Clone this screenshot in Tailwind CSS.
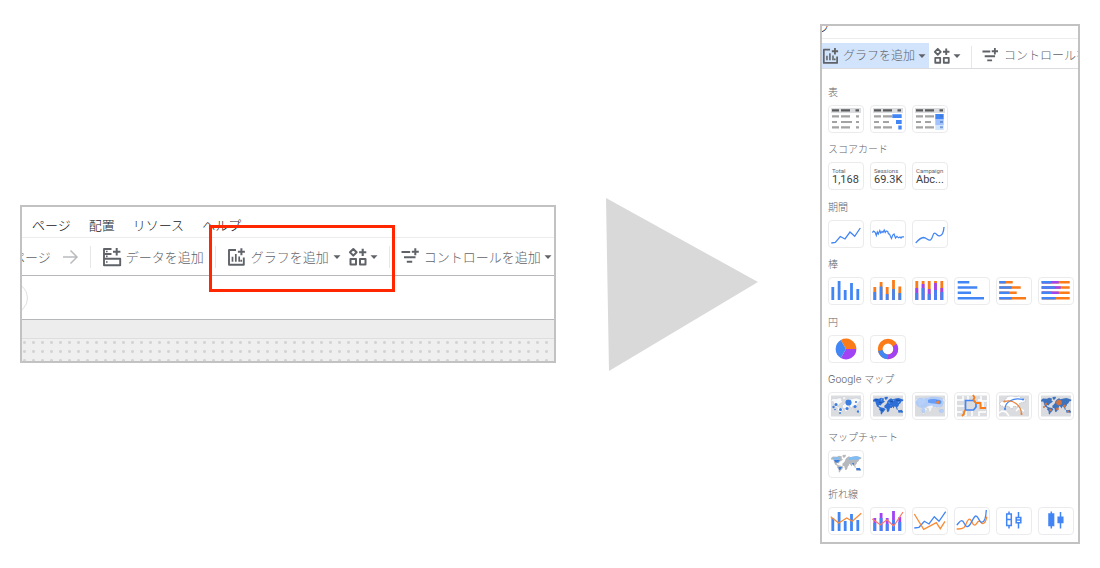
<!DOCTYPE html>
<html lang="ja">
<head>
    <meta charset="UTF-8">
    <meta name="viewport" content="width=device-width, initial-scale=1.0">
    <title>グラフを追加</title>
    <script src="https://cdn.jsdelivr.net/npm/@tailwindcss/browser@4"></script>
</head>
<body class="bg-white font-[Inter,'Noto_Sans_CJK_JP',sans-serif] font-light text-[#5f6368]">

<!-- Shared icons -->
<svg class="hidden" aria-hidden="true">
    <symbol id="icon-data" viewBox="0 0 20 20">
        <path d="M9.500 2H2v16.200h16.200v-6.400H2M2 7h7.500" fill="none" stroke="currentColor" stroke-width="1.900" stroke-linejoin="round"/>
        <path d="M14.700 1v7.400M11 4.700h7.400" stroke="currentColor" stroke-width="2"/>
        <path d="M4 3.700h1.600v1.600H4zM4 8.600h1.600v1.600H4zM4 14.200h1.600v1.600H4z" fill="currentColor"/>
    </symbol>
    <symbol id="icon-chart" viewBox="0 0 20 20">
        <path d="M9 3H2v14.700h14.800V10.500" fill="none" stroke="currentColor" stroke-width="1.900" stroke-linejoin="round"/>
        <path d="M14.400 1.200v7M10.900 4.700h7" stroke="currentColor" stroke-width="2"/>
        <path d="M5.500 9.800v5M8.800 7v7.800M12.200 9.500v5.300M14.200 12.800v2" stroke="currentColor" stroke-width="1.700"/>
    </symbol>
    <symbol id="icon-widgets" viewBox="0 0 20 20">
        <path d="M5.300 2l3.300 3.300-3.300 3.300L2 5.300zM2.500 12H8v5.500H2.500zM12 12h5.500v5.500H12z" fill="none" stroke="currentColor" stroke-width="2" stroke-linejoin="round"/>
        <path d="M14.700 1.700v7.200M11.100 5.300h7.200" stroke="currentColor" stroke-width="2.100"/>
    </symbol>
    <symbol id="icon-filter" viewBox="0 0 20 20">
        <path d="M.5 5h8.700M3 10.300h11.500M5.800 14.800h5.400M14.300 1.200v7M10.800 4.700h7" stroke="currentColor" stroke-width="2"/>
    </symbol>
    <symbol id="icon-caret" viewBox="0 0 8 8">
        <path d="M.5 2.200h7L4 6z" fill="currentColor"/>
    </symbol>
    <symbol id="world" viewBox="0 0 36 28">
        <path d="M3 8l2-1.500 4 .2 2-1 3 .8-.5 2 1.500 1-2 1.500-1.500 1-.5 1.500-1.500-.5-1 .7 1.500 1.300 1.500.5 2.500.5 1.500 1.300-1.500 2-1.500 1.500-.7 1.700-1-.5-.3-3-1.500-1.500.5-1.500-2.500-1.500L6 12l-.7-2.500-2 .2z"/>
        <path d="M14.500 5l3-.2.500 1.200-2 2-1.200-1z"/>
        <path d="M17 11l.5-2L19 7.500l2-1.200 1.500 1 3-.8 3-.5 3 1 2 .8-.5 1.200-1.800.5-.7 1.700-1.500 1-.3 1.500-1.500 1.500.5 1.800-1.300-1-1.400-1.800-.8.5-.6 1.800-1.400-2-1.500-1 .5 1.500-1.500 1.800-.4 2-1.300 1.500-1-.8-.5-3-2-.8-.2-2 1.500-1.300z"/>
        <path d="M28 18l2 .3 1.500-.5 1.500 1.700-.5 1.500-1.700-.5-2.300.2-.3-1.500zM26 16.200l2 .8-.3.700-1.700-.7z"/>
    </symbol>
</svg>

<main class="flex min-h-screen items-center px-5">

    <!-- Toolbar -->
    <section class="relative min-w-0 flex-1 overflow-hidden border-2 border-[#c2c2c2] text-[13px] leading-5">
        <nav class="flex h-[31px] items-center gap-[18px] border-b border-[#ececec] pt-1.5 pl-2.5 whitespace-nowrap text-[#202124]">
            <a href="#">ページ</a>
            <a href="#">配置</a>
            <a href="#">リソース</a>
            <a href="#">ヘルプ</a>
        </nav>
        <div class="flex h-[38px] items-center gap-[11px] border-b border-[#b6b7ba] whitespace-nowrap">
            <button type="button" class="-ml-2.5 flex shrink-0 items-center gap-3">
                ページ
                <svg class="h-4 w-4 text-[#b9bbbe]" viewBox="0 0 16 16" fill="none" stroke="currentColor" stroke-width="1.500"><path d="M0 8h14M7.500 1.500L14 8l-6.500 6.500"/></svg>
            </button>
            <span class="h-[22px] w-px shrink-0 bg-[#e6e7e9]"></span>
            <button type="button" class="flex shrink-0 items-center gap-1"><svg class="h-5 w-5"><use href="#icon-data"/></svg>データを追加</button>
            <span class="h-[22px] w-px shrink-0 bg-[#e6e7e9]"></span>
            <button type="button" class="flex shrink-0 items-center gap-1"><svg class="h-5 w-5"><use href="#icon-chart"/></svg>グラフを追加<svg class="h-2 w-2"><use href="#icon-caret"/></svg></button>
            <button type="button" aria-label="コミュニティ ビジュアリゼーション" class="-ml-1 flex shrink-0 items-center gap-0.5"><svg class="h-5 w-5"><use href="#icon-widgets"/></svg><svg class="h-2 w-2"><use href="#icon-caret"/></svg></button>
            <span class="h-[22px] w-px shrink-0 bg-[#e6e7e9]"></span>
            <button type="button" class="flex shrink-0 items-center gap-[3px]"><svg class="h-5 w-5"><use href="#icon-filter"/></svg>コントロールを追加<svg class="h-2 w-2"><use href="#icon-caret"/></svg></button>
        </div>
        <div class="flex h-11 items-center border-b border-[#b6b7ba]">
            <span class="-ml-[26px] h-8 w-8 rounded-full border border-[#dfe0e2]"></span>
        </div>
        <div class="h-[19px] border-b border-[#dedede] bg-[#ededed]"></div>
        <div class="h-[22px] bg-[#efefef] bg-[radial-gradient(#d4d4d4_1px,transparent_2px)] bg-[size:9px_9px] bg-[position:-2px_-1px]"></div>
        <!-- Highlight -->
        <div class="absolute top-[18px] left-[187px] h-[67px] w-[186px] border-3 border-[#ff2600]"></div>
    </section>

    <svg class="mr-[62px] ml-[50px] h-[173px] w-[152px] shrink-0" viewBox="0 0 152 173" aria-hidden="true"><path d="M0 0l152 84L3 173z" fill="#d9d9d9"/></svg>

    <!-- Chart picker -->
    <section class="flex min-h-[520px] w-[260px] shrink-0 flex-col overflow-hidden border-2 border-[#c2c2c2]">
        <div class="flex h-[13px] items-end overflow-hidden border-b border-[#ececec] text-[12px] leading-5 text-[#202124]"><span class="-ml-1">プ</span></div>
        <div class="flex h-[30px] items-end overflow-hidden border-b border-[#dadce0] text-[12px] whitespace-nowrap">
            <button type="button" aria-expanded="true" class="flex h-[25px] shrink-0 items-center gap-[3px] bg-[#d2e3fc] pr-[3px]"><svg class="h-[18px] w-[18px]"><use href="#icon-chart"/></svg>グラフを追加<svg class="h-2 w-2"><use href="#icon-caret"/></svg></button>
            <button type="button" aria-label="コミュニティ ビジュアリゼーション" class="ml-1 flex h-[25px] shrink-0 items-center gap-0.5"><svg class="h-[18px] w-[18px]"><use href="#icon-widgets"/></svg><svg class="h-2 w-2"><use href="#icon-caret"/></svg></button>
            <span class="mx-2.5 h-[22px] w-px shrink-0 bg-[#e6e7e9]"></span>
            <button type="button" class="flex h-[25px] shrink-0 items-center gap-1"><svg class="h-[18px] w-[18px]"><use href="#icon-filter"/></svg>コントロールを追加</button>
        </div>

        <div class="flex flex-1 flex-col justify-between pt-3.5 pr-1 pb-[7px] pl-1.5 text-[10px]">
            <div>
                <h3 class="mb-1 leading-[18px]">表</h3>
                <div class="grid grid-cols-6 gap-x-1.5">
                    <button type="button" aria-label="表" class="h-7 rounded-sm border border-[#ebebed]">
                        <svg class="h-full w-full" viewBox="1 1 34 26">
                            <path d="M3 3h30v5H3z" fill="#dadce0"/>
                            <path d="M4 5.300h7M13 5.300h9M27.500 5.300h3.500" stroke="#5a5a5a" stroke-width="2.200"/>
                            <path d="M4 11.300h7M13 11.300h9M28 11.300h3M4 17h5M13 17h11M28 17h3M4 22.300h7M13 22.300h9M28 22.300h3" stroke="#a3a3a3" stroke-width="2.200"/>
                        </svg>
                    </button>
                    <button type="button" aria-label="棒付きデータ表" class="h-7 rounded-sm border border-[#ebebed]">
                        <svg class="h-full w-full" viewBox="1 1 34 26">
                            <path d="M3 3h30v5H3z" fill="#dadce0"/>
                            <path d="M4 5.300h7M13 5.300h9M27.500 5.300h3.500" stroke="#5a5a5a" stroke-width="2.200"/>
                            <path d="M4 11.300h7M13 11.300h9M4 17h5M13 17h6M4 22.300h7M13 22.300h9" stroke="#a3a3a3" stroke-width="2.200"/>
                            <path d="M22.300 9.300h9.400V13h-9.400zM26 15h5.700v4H26zM28.300 20.500h3.400v4h-3.400z" fill="#4285f4"/>
                        </svg>
                    </button>
                    <button type="button" aria-label="ヒートマップ付きデータ表" class="h-7 rounded-sm border border-[#ebebed]">
                        <svg class="h-full w-full" viewBox="1 1 34 26">
                            <path d="M3 3h30v5H3z" fill="#dadce0"/>
                            <path d="M4 5.300h7M13 5.300h9M27.500 5.300h3.500" stroke="#5a5a5a" stroke-width="2.200"/>
                            <path d="M4 11.300h7M13 11.300h9M4 17h5M13 17h6M4 22.300h7M13 22.300h9" stroke="#a3a3a3" stroke-width="2.200"/>
                            <path d="M23.300 9h8.400v5.500h-8.400z" fill="#4285f4"/>
                            <path d="M23.300 14.500h8.400V20h-8.400z" fill="#a1c2fa"/>
                            <path d="M23.300 20h8.400v5h-8.400z" fill="#d2e3fc"/>
                            <path d="M28 11.300h3M28 17h3M28 22.300h3" stroke="#3f6fc4" stroke-opacity=".6" stroke-width="2"/>
                        </svg>
                    </button>
                </div>
            </div>

            <div>
                <h3 class="mb-1 leading-[18px]">スコアカード</h3>
                <div class="grid grid-cols-6 gap-x-1.5 font-[Roboto,sans-serif] font-normal">
                    <button type="button" class="flex h-7 flex-col justify-center rounded-sm border border-[#ebebed] pl-[3px] text-left"><span class="text-[6px] leading-[7px]">Total</span><span class="text-[11px] leading-3 text-[#3c4043]">1,168</span></button>
                    <button type="button" class="flex h-7 flex-col justify-center rounded-sm border border-[#ebebed] pl-[3px] text-left"><span class="text-[6px] leading-[7px]">Sessions</span><span class="text-[11px] leading-3 text-[#3c4043]">69.3K</span></button>
                    <button type="button" class="flex h-7 flex-col justify-center rounded-sm border border-[#ebebed] pl-[3px] text-left"><span class="text-[6px] leading-[7px]">Campaign</span><span class="text-[11px] leading-3 text-[#3c4043]">Abc...</span></button>
                </div>
            </div>

            <div>
                <h3 class="mb-1 leading-[18px]">期間</h3>
                <div class="grid grid-cols-6 gap-x-1.5">
                    <button type="button" aria-label="時系列グラフ" class="h-7 rounded-sm border border-[#ebebed]">
                        <svg class="h-full w-full" viewBox="1 1 34 26" fill="none" stroke="#4285f4" stroke-width="1.300"><path d="M3.300 23l4-.5 5-6 4.700 2.500 5-7 4.700 4.300 5.600-8.300"/></svg>
                    </button>
                    <button type="button" aria-label="スパークライン" class="h-7 rounded-sm border border-[#ebebed]">
                        <svg class="h-full w-full" viewBox="1 1 34 26" fill="none" stroke="#4285f4" stroke-width="1.200"><path d="M2.300 12.500l1.500-1.500 1.500 1.500 1 3 1-3.500 1 2 1.500-3.500 1 2.500 1.200-1.500 1 1 1.200-2.500 1 2.500 1-1.500 1.500.5.800 2.500h1l1 2.500 1 2 1.200-3.500 1.300-1 1.500 4 1.500-1.700 1.500 1.500 1.500-.8 1 1 1-1.200h2"/></svg>
                    </button>
                    <button type="button" aria-label="平滑時系列グラフ" class="h-7 rounded-sm border border-[#ebebed]">
                        <svg class="h-full w-full" viewBox="1 1 34 26" fill="none" stroke="#4285f4" stroke-width="1.300"><path d="M3.700 23c2.500-3 4-5 7.800-5.500 3 0 4.500 3.500 7 2.500 2.500-1.500 2-7 4.300-6.800 1.700.2 2.700 3.300 4.900 2.700 3-.7 4-4 4.300-8.900"/></svg>
                    </button>
                </div>
            </div>

            <div>
                <h3 class="mb-1 leading-[18px]">棒</h3>
                <div class="grid grid-cols-6 gap-x-1.5">
                    <button type="button" aria-label="縦棒グラフ" class="h-7 rounded-sm border border-[#ebebed]">
                        <svg class="h-full w-full" viewBox="1 1 34 26" stroke="#4285f4" stroke-width="2.800"><path d="M4.800 23V10M11.100 23V4M17.200 23V13M23.500 23V6M29.800 23V12"/></svg>
                    </button>
                    <button type="button" aria-label="積み上げ縦棒グラフ" class="h-7 rounded-sm border border-[#ebebed]">
                        <svg class="h-full w-full" viewBox="1 1 34 26" stroke-width="2.800"><path stroke="#fa7b17" d="M4.800 23V10M11.100 23V5M17.200 23V10M23.500 23V3M29.800 23V9.500"/><path stroke="#4285f4" d="M4.800 23v-8M11.100 23V9.500M17.200 23v-6M23.500 23V12M29.800 23v-7"/></svg>
                    </button>
                    <button type="button" aria-label="100% 積み上げ縦棒グラフ" class="h-7 rounded-sm border border-[#ebebed]">
                        <svg class="h-full w-full" viewBox="1 1 34 26" stroke-width="2.800"><path stroke="#fa7b17" d="M4.800 23V4M11.100 23V4M17.200 23V4M23.500 23V4M29.800 23V4"/><path stroke="#a142f4" d="M4.800 23V11M11.100 23V7M17.200 23V12M23.500 23V6M29.800 23V11"/><path stroke="#4285f4" d="M4.800 23v-7M11.100 23V11M17.200 23v-6M23.500 23V13M29.800 23v-8"/></svg>
                    </button>
                    <button type="button" aria-label="横棒グラフ" class="h-7 rounded-sm border border-[#ebebed]">
                        <svg class="h-full w-full" viewBox="1 1 34 26" stroke="#4285f4" stroke-width="2.600"><path d="M3.700 5.200h11.600M3.700 10.500h19.600M3.700 15.800H17M3.700 21.200H30"/></svg>
                    </button>
                    <button type="button" aria-label="積み上げ横棒グラフ" class="h-7 rounded-sm border border-[#ebebed]">
                        <svg class="h-full w-full" viewBox="1 1 34 26" stroke-width="2.600"><path stroke="#fa7b17" d="M3.300 5.200h13.400M3.300 10.500h21.400M3.300 15.800h17.400M3.300 21.200H30"/><path stroke="#4285f4" d="M3.300 5.200h6.400M3.300 10.500h12.400M3.300 15.800h10M3.300 21.200h12.400"/></svg>
                    </button>
                    <button type="button" aria-label="100% 積み上げ横棒グラフ" class="h-7 rounded-sm border border-[#ebebed]">
                        <svg class="h-full w-full" viewBox="1 1 34 26" stroke-width="2.600"><path stroke="#fa7b17" d="M3.700 5.200h28M3.700 10.500h28M3.700 15.800h28M3.700 21.200h28"/><path stroke="#a142f4" d="M3.700 5.200h17M3.700 10.500h19M3.700 15.800h17"/><path stroke="#4285f4" d="M3.700 5.200H13M3.700 10.500h13M3.700 15.800H14M3.700 21.200h14"/></svg>
                    </button>
                </div>
            </div>

            <div>
                <h3 class="mb-1 leading-[18px]">円</h3>
                <div class="grid grid-cols-6 gap-x-1.5">
                    <button type="button" aria-label="円グラフ" class="h-7 rounded-sm border border-[#ebebed]">
                        <svg class="h-full w-full" viewBox="1 1 34 26">
                            <path d="M18 14l-5.200-9A10.400 10.400 0 0 1 28.400 14z" fill="#fa7b17"/>
                            <path d="M18 14h10.400a10.400 10.400 0 0 1-15.600 9z" fill="#a142f4"/>
                            <path d="M18 14l-5.200 9a10.400 10.400 0 0 1 0-18z" fill="#4285f4"/>
                        </svg>
                    </button>
                    <button type="button" aria-label="ドーナツグラフ" class="h-7 rounded-sm border border-[#ebebed]">
                        <svg class="h-full w-full" viewBox="1 1 34 26" fill="none" stroke-width="4.800">
                            <circle cx="18" cy="14" r="7.800" stroke="#fa7b17"/>
                            <circle cx="18" cy="14" r="7.800" stroke="#a142f4" pathLength="360" stroke-dasharray="120 240" transform="rotate(-30 18 14)"/>
                            <circle cx="18" cy="14" r="7.800" stroke="#4285f4" pathLength="360" stroke-dasharray="78 282" transform="rotate(90 18 14)"/>
                        </svg>
                    </button>
                </div>
            </div>

            <div>
                <h3 class="mb-1 leading-[18px]">Google マップ</h3>
                <div class="grid grid-cols-6 gap-x-1.5">
                    <button type="button" aria-label="バブルマップ" class="h-7 rounded-sm border border-[#ebebed]">
                        <svg class="h-full w-full" viewBox="1 1 34 26">
                            <path d="M3 3.500h30v21H3z" fill="#dadce0"/>
                            <use href="#world" width="36" height="28" fill="#f8f9fa" stroke="#aeb4ba" stroke-width=".3"/>
                            <g fill="#3b7de0"><circle cx="20.500" cy="10.500" r="3.100"/><circle cx="8" cy="12.500" r="1.500"/><circle cx="12.500" cy="17.500" r="1.500"/><circle cx="12" cy="21" r="1"/><circle cx="19" cy="16.500" r="1.500"/><circle cx="5.500" cy="15" r="1.200"/><circle cx="27" cy="14.500" r="1.600"/><circle cx="30" cy="19.500" r="1.200"/><circle cx="28" cy="10" r="1"/><circle cx="7" cy="17.500" r=".8"/></g>
                        </svg>
                    </button>
                    <button type="button" aria-label="塗り分けマップ" class="h-7 rounded-sm border border-[#ebebed]">
                        <svg class="h-full w-full" viewBox="1 1 34 26">
                            <path d="M3 3.500h30v21H3z" fill="#dadce0"/>
                            <use href="#world" width="36" height="28" fill="#2c6ed5"/>
                            <path d="M5 8l3-.5M9 10l2.500.8M20 9l3 1M26 8l4 .5M21 16l1-2M11 18l2 .5" stroke="#174ea6"/>
                            <path d="M12 6.500l-.7 2M24 7.500l-.5 1.500M28 11l1-1.500M18.500 10.500l1.500.8" stroke="#8ab4f8" stroke-width=".8"/>
                        </svg>
                    </button>
                    <button type="button" aria-label="ヒートマップ" class="h-7 rounded-sm border border-[#ebebed]">
                        <svg class="h-full w-full" viewBox="1 1 34 26">
                            <path d="M3 3.500h30v21H3z" fill="#dadce0"/>
                            <use href="#world" width="36" height="28" fill="#f1f3f4" stroke="#bdc1c6" stroke-width=".3"/>
                            <path d="M4 9c1-3 5-3.500 8-2.500 6-2 12-2 17-1 3 1 3.500 6 1 9-3 1.500-7 1-10-1-5 0-8 4-12 2-3-1-5-4-4-6.500zM10 16c3-1 4 2 3 4.500-2 1.500-5-.5-3-4.500zM27 18c2-2 6-1 5 2-2 2-6 1-5-2z" fill="#a8c7fa" fill-opacity=".8"/>
                            <path d="M16 8c3-1.500 9-1 13 .5 1.500 2-.5 4-2.500 3.700C23 11.500 19 11.700 16 10.500z" fill="#669df6"/>
                            <path d="M24 8.500c2-.7 5 .2 4.500 2.500-1.500 1.500-4 0-4.500-2.500z" fill="#4285f4"/><circle cx="26" cy="10.300" r="1.700" fill="#f0803c"/>
                        </svg>
                    </button>
                    <button type="button" aria-label="ラインマップ" class="h-7 rounded-sm border border-[#ebebed]">
                        <svg class="h-full w-full" viewBox="1 1 34 26" fill="none">
                            <path d="M3 3.500h30v21H3z" fill="#dadce0"/>
                            <path d="M3 8h6V4M3 14h7M14 4v4M27 4v5h6M24 8h4M18 18v6M3 20h5M12 24v-5M25 24v-4h7M25 11h4v4" stroke="#fff" stroke-width="1.500"/>
                            <path d="M11.500 8.500h8l2.500 2.500v4l-2.500 3h-8z" stroke="#4285f4" stroke-width="1.700"/>
                            <path d="M19 3l1.500 2.500-1 2L22 11h4.500v5H32M11.500 18l-1.500 2v2l-2 2" stroke="#fa7b17" stroke-width="1.800"/>
                        </svg>
                    </button>
                    <button type="button" aria-label="接続マップ" class="h-7 rounded-sm border border-[#ebebed]">
                        <svg class="h-full w-full" viewBox="1 1 34 26" fill="none">
                            <path d="M3 3.500h30v21H3z" fill="#dadce0"/>
                            <path d="M3 12l3-3 2 1 3-5 4-1 5 1 3-1 2 2 4 1v3l-5 1-3 4-3-1-2 3-4-3-4 1-4-2z" fill="#fff" stroke="#9aa0a6" stroke-width=".6" stroke-dasharray="1 1"/>
                            <path d="M3 21l3-2 4 1 3 4M20 19l3-3 5 3" stroke="#fff" stroke-width="1.500"/>
                            <path d="M9 17C9 10 17 5 27 7.500" stroke="#4285f4" stroke-width="1.200"/>
                            <path d="M8.500 9.500C17 7 25 13 25.500 22" stroke="#e8833a" stroke-width="1.200"/>
                            <circle cx="9" cy="17" r="1.100" fill="#4285f4"/><circle cx="27" cy="7.500" r="1.100" fill="#4285f4"/><circle cx="8.500" cy="9.500" r="1.100" fill="#e8833a"/><circle cx="25.500" cy="22" r="1.100" fill="#e8833a"/>
                        </svg>
                    </button>
                    <button type="button" aria-label="Google マップ" class="h-7 rounded-sm border border-[#ebebed]">
                        <svg class="h-full w-full" viewBox="1 1 34 26">
                            <path d="M3 3.500h30v21H3z" fill="#dadce0"/>
                            <use href="#world" width="36" height="28" fill="#3f72bd"/>
                            <g fill="#cf7442"><circle cx="21" cy="10.500" r="2.800"/><circle cx="8" cy="12" r="1.300"/><circle cx="12.500" cy="18" r="1.300"/><circle cx="19.500" cy="17" r="1.400"/><circle cx="6" cy="15" r="1"/><circle cx="26.500" cy="14" r="1.500"/><circle cx="30" cy="19.500" r="1"/></g>
                        </svg>
                    </button>
                </div>
            </div>

            <div>
                <h3 class="mb-1 leading-[18px]">マップチャート</h3>
                <div class="grid grid-cols-6 gap-x-1.5">
                    <button type="button" aria-label="マップチャート" class="h-7 rounded-sm border border-[#ebebed]">
                        <svg class="h-full w-full" viewBox="2 1 32 26">
                            <use href="#world" width="36" height="28" fill="#b5b8bc"/>
                            <path d="M4 8l5-1 2.500.5 1 1.500-5.500 1zM20 9l2.500-2 6-.7 4.500 1L29.500 10l-4-.5-3 .8z" fill="#7fbdf5"/>
                            <path d="M6 10h6l-2 2.500H7.500zM10.500 17h3.500l-1.500 2.500-1.500.5zM28.300 18h3.500l1 2.200H28.500zM24 13h2l-.5 3z" fill="#3b7de0"/>
                        </svg>
                    </button>
                </div>
            </div>

            <div>
                <h3 class="mb-1 leading-[18px]">折れ線</h3>
                <div class="grid grid-cols-6 gap-x-1.5">
                    <button type="button" aria-label="複合グラフ" class="h-7 rounded-sm border border-[#ebebed]">
                        <svg class="h-full w-full" viewBox="1 1 34 26" fill="none"><path stroke="#4285f4" stroke-width="2.800" d="M4.800 24V11M11.100 24V5M17.200 24V14M23.500 24V7M29.800 24V13"/><path stroke="#fa8b35" stroke-width="1.300" d="M2.700 9.700l8 6.300 8-5 5.600 3.300 9-8"/></svg>
                    </button>
                    <button type="button" aria-label="積み上げ複合グラフ" class="h-7 rounded-sm border border-[#ebebed]">
                        <svg class="h-full w-full" viewBox="1 1 34 26" fill="none"><g stroke-width="2.800"><path stroke="#a142f4" d="M4.800 24V11M11.100 24V6M17.200 24V11M23.500 24V4M29.800 24V10"/><path stroke="#4285f4" d="M4.800 24v-8M11.100 24V11M17.200 24v-7M23.500 24V13M29.800 24V15"/></g><path stroke="#ff7769" stroke-width="1.200" d="M2.300 12l8 5.700 6.700-5 6.700 6.300L33 5"/></svg>
                    </button>
                    <button type="button" aria-label="折れ線グラフ" class="h-7 rounded-sm border border-[#ebebed]">
                        <svg class="h-full w-full" viewBox="1 1 34 26" fill="none" stroke-width="1.300"><path stroke="#4285f4" d="M2.300 21l4.700-.7 5.300-6L17 17l5.300-7.300 4.700 4.600 6.700-9.600"/><path stroke="#fa8b35" d="M2.300 7l9.400 15.300 12.600-6.600 4 6L33 14.300"/></svg>
                    </button>
                    <button type="button" aria-label="平滑折れ線グラフ" class="h-7 rounded-sm border border-[#ebebed]">
                        <svg class="h-full w-full" viewBox="1 1 34 26" fill="none" stroke-width="1.300"><path stroke="#fa8b35" d="M2.700 22c3 0 5 .3 7.300-1.500 2.300-2 3-8.300 5.500-8.300 2.300 0 2.500 6 5 6 2.300 0 2.500-4 4.700-4 2 0 2 3 4 2.300 2.500-1 3.200-4 3.600-6.800"/><path stroke="#4285f4" d="M2.700 18c1.500-1 3-4.300 5-4.300 2.500 0 3 6 5.500 6C17 19.700 19 9 22 9c2.500 0 3 6.300 5.500 6.300 3.500 0 4.500-6 4.800-12.300"/></svg>
                    </button>
                    <button type="button" aria-label="箱ひげ図" class="h-7 rounded-sm border border-[#ebebed]">
                        <svg class="h-full w-full" viewBox="1 1 34 26" fill="none" stroke="#4285f4" stroke-width="1.500"><path d="M10.700 7h4.600v11.500h-4.600zM10.700 12.500h4.600M13 4.500V7M13 18.500v3M20.200 10.500h4.600v5.300h-4.600zM20.200 13h4.600M22.500 5v5.500M22.500 15.800v5.700"/></svg>
                    </button>
                    <button type="button" aria-label="ローソク足チャート" class="h-7 rounded-sm border border-[#ebebed]">
                        <svg class="h-full w-full" viewBox="1 1 34 26" fill="#4285f4" stroke="#4285f4" stroke-width="1.500"><path d="M11 7h4.600v11.500H11zM13.300 4.500V7M13.300 18.500v3M20.200 10.300h4.600v5.300h-4.600zM22.500 5v5.500M22.500 15.800v5.700"/></svg>
                    </button>
                </div>
            </div>
        </div>
    </section>
</main>

</body>
</html>
